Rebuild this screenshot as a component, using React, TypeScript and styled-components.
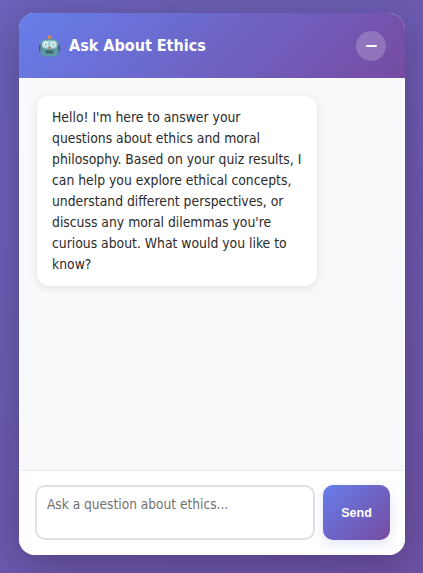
import React from "react";
import styled, { createGlobalStyle } from "styled-components";

const Global = createGlobalStyle`
  html, body { margin: 0; padding: 0; height: 100%; }
  #root { height: 100%; }
  * { box-sizing: border-box; }
`;

const Page = styled.div`
  height: 573px;
  width: 423px;
  overflow: hidden;
  padding: 13px 18px 18px 19px;
  background: linear-gradient(135deg, #6b62ba 0%, #6e52a6 100%);
  font-family: "DejaVu Sans Condensed", "DejaVu Sans", sans-serif;
`;

const Card = styled.section`
  height: 542px;
  display: flex;
  flex-direction: column;
  border-radius: 16px;
  overflow: hidden;
  background: #fff;
  box-shadow: 0 10px 40px rgba(0, 0, 0, 0.25);
`;

const Header = styled.header`
  height: 65px;
  flex: none;
  display: flex;
  align-items: center;
  justify-content: space-between;
  padding: 0 19px 0 20px;
  background: linear-gradient(135deg, #667eea 0%, #764ba2 100%);
`;

const Title = styled.h1`
  margin: 0;
  display: flex;
  align-items: center;
  gap: 9px;
  color: #fff;
  font-size: 16px;
  font-weight: 700;
`;

const Minimize = styled.button`
  width: 30px;
  height: 30px;
  border: 0;
  border-radius: 50%;
  padding: 0;
  display: flex;
  align-items: center;
  justify-content: center;
  background: rgba(255, 255, 255, 0.2);
`;

const Dash = styled.span`
  width: 11px;
  height: 2px;
  border-radius: 1px;
  background: #fff;
`;

const Messages = styled.div`
  flex: 1;
  padding: 18px 18px;
  background: #f8f9fa;
`;

const Bubble = styled.div`
  width: 280px;
  padding: 11px 13px 11px 15px;
  border-radius: 12px;
  background: #fff;
  color: #2b2b2b;
  font-size: 13.8px;
  line-height: 21px;
  box-shadow: 0 2px 8px rgba(0, 0, 0, 0.1);
`;

const Footer = styled.footer`
  flex: none;
  height: 85px;
  display: flex;
  gap: 8px;
  padding: 14px 15px 15px 16px;
  background: #fff;
  border-top: 1px solid #e9ecef;
`;

const Input = styled.textarea`
  flex: 1;
  height: 55px;
  resize: none;
  padding: 9px 10px;
  border: 2px solid #e0e0e0;
  border-radius: 10px;
  outline: none;
  color: #333;
  font-family: inherit;
  font-size: 13.6px;
  line-height: 17px;
  &::placeholder { color: #707070; opacity: 1; }
`;

const Send = styled.button`
  width: 67px;
  height: 55px;
  border: 0;
  border-radius: 10px;
  color: #fff;
  font-family: "Liberation Sans", sans-serif;
  font-size: 12.5px;
  font-weight: 700;
  background: linear-gradient(135deg, #667eea 0%, #764ba2 100%);
  box-shadow: 0 4px 12px rgba(102, 126, 234, 0.2);
`;

const Robot = () => (
  <svg width="21" height="22" viewBox="0 0 21 22" aria-hidden="true">
    <rect x="9.7" y="2" width="1.6" height="3" fill="#8a6a55" />
    <circle cx="10.5" cy="2.2" r="2" fill="#d08a58" />
    <rect x="0" y="10" width="3" height="6.5" rx="1" fill="#4a5560" />
    <rect x="18" y="10" width="3" height="6.5" rx="1" fill="#4a5560" />
    <rect x="1.5" y="4.2" width="18" height="17.3" rx="4.5" fill="#5b9aa3" />
    <rect x="3" y="5.6" width="15" height="8" rx="3.5" fill="#a9d8da" />
    <circle cx="6.8" cy="9.4" r="2.3" fill="#f0fafa" />
    <circle cx="14.2" cy="9.4" r="2.3" fill="#f0fafa" />
    <circle cx="6.8" cy="9.4" r="1" fill="#5b9aa3" />
    <circle cx="14.2" cy="9.4" r="1" fill="#5b9aa3" />
    <path d="M10.5 10.6l1.7 2.8h-3.4z" fill="#c9725a" />
    <rect x="6.5" y="15.6" width="8" height="3" rx="1" fill="#44606b" />
  </svg>
);

export default function App() {
  return (
    <Page>
      <Global />
      <Card>
        <Header>
          <Title>
            <Robot />
            Ask About Ethics
          </Title>
          <Minimize aria-label="Minimize">
            <Dash />
          </Minimize>
        </Header>
        <Messages>
          <Bubble>
            Hello! I'm here to answer your questions about ethics and moral philosophy. Based on your quiz results, I can help you explore ethical concepts, understand different perspectives, or discuss any moral dilemmas you're curious about. What would you like to know?
          </Bubble>
        </Messages>
        <Footer>
          <Input placeholder="Ask a question about ethics..." />
          <Send>Send</Send>
        </Footer>
      </Card>
    </Page>
  );
}
